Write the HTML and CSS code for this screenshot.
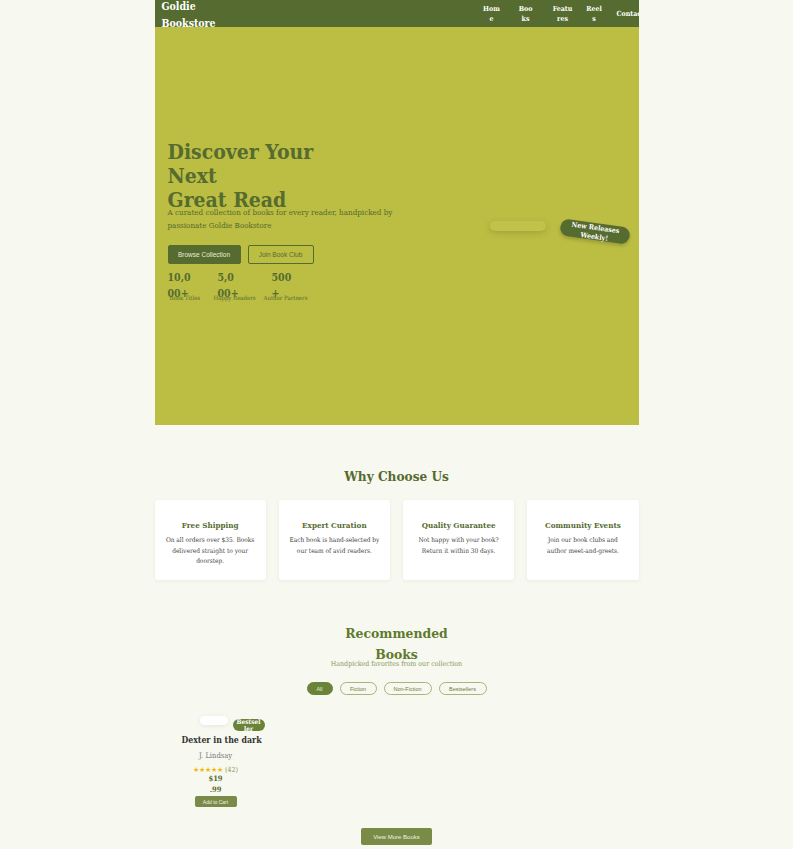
FILE: index.html
```html
<!DOCTYPE html>
<html lang="en">
<head>
<meta charset="utf-8">
<title>Goldie Bookstore</title>
<link rel="stylesheet" href="styles.css">
</head>
<body>
<div class="page">
  <header class="nav">
    <div class="logo">Goldie<br>Bookstore</div>
    <ul class="links">
      <li class="l1">Home</li>
      <li class="l2">Books</li>
      <li class="l3">Features</li>
      <li class="l4">Reels</li>
      <li class="l5">Contact</li>
    </ul>
  </header>

  <section class="hero">
    <div class="hero-text">
      <h1>Discover Your<br>Next<br>Great Read</h1>
      <p class="lead">A curated collection of books for every reader, handpicked by passionate Goldie Bookstore</p>
      <div class="actions">
        <button class="btn-fill">Browse Collection</button>
        <button class="btn-line">Join Book Club</button>
      </div>
      <div class="stats">
        <div class="stat s1"><div class="num">10,0<wbr>00+</div><div class="lbl">Book Titles</div></div>
        <div class="stat s2"><div class="num">5,0<wbr>00+</div><div class="lbl">Happy Readers</div></div>
        <div class="stat s3"><div class="num">500<wbr>+</div><div class="lbl">Author Partners</div></div>
      </div>
    </div>
    <div class="hero-visual">
      <div class="hero-img"></div>
      <div class="hero-badge">New Releases<br>Weekly!</div>
    </div>
  </section>

  <section class="why">
    <h2 class="sec-title">Why Choose Us</h2>
    <div class="cards">
      <div class="card"><h3>Free Shipping</h3><p>On all orders over $35. Books delivered straight to your doorstep.</p></div>
      <div class="card"><h3>Expert Curation</h3><p>Each book is hand-selected by our team of avid readers.</p></div>
      <div class="card"><h3>Quality Guarantee</h3><p>Not happy with your book? Return it within 30 days.</p></div>
      <div class="card"><h3>Community Events</h3><p>Join our book clubs and author meet-and-greets.</p></div>
    </div>
  </section>

  <section class="rec">
    <h2 class="rec-title">Recommended Books</h2>
    <p class="rec-sub">Handpicked favorites from our collection</p>
    <div class="filters">
      <button class="chip active">All</button>
      <button class="chip c-fic">Fiction</button>
      <button class="chip c-wide">Non-Fiction</button>
      <button class="chip c-wide">Bestsellers</button>
    </div>
    <div class="books">
      <div class="book">
        <div class="book-media">
          <div class="book-img"></div>
          <div class="book-badge">Bestsel<wbr>ler</div>
        </div>
        <h4>Dexter in the dark</h4>
        <div class="author">J. Lindsay</div>
        <div class="rating"><span class="stars">★★★★★</span> (42)</div>
        <div class="price">$19<wbr>.99</div>
        <button class="cart">Add to Cart</button>
      </div>
    </div>
    <button class="more">View More Books</button>
  </section>
</div>
</body>
</html>
```

FILE: styles.css
```css
* { box-sizing: border-box; }
body {
  margin: 0;
  background: #f7f8f0;
  font-family: Georgia, "DejaVu Serif", serif;
  font-stretch: condensed;
}
.page {
  width: 484px;
  margin: 0 auto;
}
button { font-family: "Liberation Sans", Arial, sans-serif; font-stretch: normal; cursor: pointer; }

/* NAV */
.nav {
  height: 27px;
  background: #556b2f;
  display: flex;
  justify-content: space-between;
  align-items: flex-start;
  padding-left: 7px;
  overflow: hidden;
}
.logo {
  color: #fff;
  font-weight: bold;
  font-size: 10.5px;
  line-height: 16.5px;
  margin-top: -2px;
}
.links {
  list-style: none;
  margin: 0 -16px 0 0;
  padding: 0;
  display: flex;
  align-items: center;
  height: 27px;
  color: #fff;
  font-size: 7px;
  font-weight: bold;
  line-height: 10px;
  text-align: center;
}
.links li { word-break: break-all; }
.l1 { width: 18px; }
.l2 { width: 15px; margin-left: 17.5px; }
.l3 { width: 21px; margin-left: 19px; }
.l4 { width: 16px; margin-left: 13px; }
.l5 { width: 38px; text-align: left; margin-left: 14.5px; white-space: nowrap; }

/* HERO */
.hero {
  height: 398px;
  background: #bcbd43;
  display: flex;
  align-items: center;
  padding: 0 13px;
  color: #556b2f;
}
.hero-text { width: 250px; margin-top: -10px; }
.hero h1 {
  margin: 0;
  font-size: 21px;
  line-height: 24px;
  font-weight: bold;
  color: #556b2f;
}
.lead {
  margin: -5px 0 0;
  font-size: 8px;
  line-height: 12.5px;
  color: #556b2f;
  width: 250px;
}
.actions { display: flex; gap: 7px; margin-top: 13px; }
.btn-fill, .btn-line {
  height: 19px;
  font-size: 6.5px;
  border-radius: 2px;
  padding: 0;
}
.btn-fill { width: 73px; background: #556b2f; color: #e8ecd8; border: 1px solid #556b2f; }
.btn-line { width: 66px; background: transparent; color: #556b2f; border: 1px solid #556b2f; }
.stats { display: flex; margin-top: 5px; }
.stat { display: flex; flex-direction: column; }
.num {
  width: 24px;
  height: 16px;
  font-size: 10.5px;
  font-weight: bold;
  line-height: 16px;
}
.lbl {
  margin-top: 8px;
  font-size: 6px;
  line-height: 9px;
  white-space: nowrap;
}
.s1 { width: 46px; }
.s1 .lbl { margin-left: 2px; }
.s2 { width: 50px; }
.s2 .num { margin-left: 4px; width: 19px; }
.s3 .num { margin-left: 8px; width: 22px; }
.hero-visual {
  flex: 1;
  position: relative;
  height: 60px;
  display: flex;
  align-items: center;
  padding-left: 72px;
}
.hero-img {
  width: 56px;
  height: 10px;
  border-radius: 6px;
  background: #c1c24c;
  box-shadow: 0 2px 6px rgba(80, 90, 20, 0.25);
}
.hero-badge {
  position: absolute;
  left: 142px;
  top: 27px;
  width: 70px;
  height: 17px;
  border-radius: 9px;
  background: #556b2f;
  color: #fff;
  font-size: 7px;
  font-weight: bold;
  line-height: 9px;
  text-align: center;
  transform: rotate(8deg);
  box-shadow: 0 2px 4px rgba(0,0,0,0.2);
}

/* WHY */
.why { padding-top: 42px; }
.sec-title {
  margin: 0;
  text-align: center;
  font-size: 13.5px;
  line-height: 18px;
  color: #556b2f;
}
.cards {
  display: grid;
  grid-template-columns: repeat(4, 1fr);
  gap: 13px;
  margin-top: 15px;
}
.card {
  background: #fff;
  height: 80px;
  border-radius: 3px;
  box-shadow: 0 1px 4px rgba(0,0,0,0.06);
  text-align: center;
  padding: 19px 10px 0;
}
.card h3 {
  margin: 0 0 4px;
  font-size: 8px;
  line-height: 12px;
  color: #556b2f;
}
.card p {
  margin: 0;
  font-size: 6.5px;
  line-height: 10.5px;
  color: #444;
}

/* RECOMMENDED */
.rec { padding-top: 43px; text-align: center; }
.rec-title {
  margin: 0 auto;
  width: 120px;
  height: 35px;
  font-size: 13.8px;
  line-height: 21px;
  color: #5f7a2e;
}
.rec-sub {
  margin: 0;
  font-size: 7px;
  line-height: 12px;
  color: #8a9a5b;
}
.filters {
  display: flex;
  justify-content: center;
  gap: 7px;
  margin-top: 12px;
}
.chip {
  height: 13px;
  border-radius: 7px;
  border: 1px solid #a9b47a;
  background: transparent;
  color: #6b7f3a;
  font-size: 5.5px;
  padding: 0;
}
.chip.active { width: 26px; background: #6b8239; border-color: #6b8239; color: #e7ecd6; }
.c-fic { width: 37px; }
.c-wide { width: 48px; }

.books {
  display: grid;
  grid-template-columns: repeat(4, 1fr);
  gap: 13px;
  margin-top: 19px;
}
.book { text-align: center; width: 122px; }
.book-media {
  position: relative;
  height: 20px;
  display: flex;
  justify-content: center;
  padding-top: 2px;
}
.book-img {
  width: 28px;
  height: 9px;
  border-radius: 5px;
  background: #fff;
  box-shadow: 0 1px 4px rgba(0,0,0,0.08);
  margin-right: 3px;
}
.book-badge {
  position: absolute;
  left: 78px;
  top: 5px;
  width: 32px;
  height: 12px;
  border-radius: 6px;
  background: #6b8239;
  color: #fff;
  font-size: 6.5px;
  font-weight: bold;
  line-height: 7px;
  overflow: hidden;
  padding: 0 3px;
}
.book h4 {
  margin: 0;
  font-size: 8.7px;
  line-height: 13px;
  color: #333;
  padding-left: 12px;
  white-space: nowrap;
}
.author {
  margin-top: 3.5px;
  font-size: 7.5px;
  line-height: 10px;
  color: #777;
}
.rating {
  margin-top: 5px;
  font-size: 7px;
  line-height: 9px;
  color: #8a9a5b;
}
.stars { color: #f2b705; }
.price {
  width: 16px;
  margin: -2px auto 0;
  font-size: 7.5px;
  font-weight: bold;
  line-height: 11px;
  color: #556b2f;
}
.cart {
  display: block;
  margin: 1.5px auto 0;
  width: 42px;
  height: 11px;
  border: none;
  border-radius: 2px;
  background: #7a8b48;
  color: #eef1e2;
  font-size: 5px;
  padding: 0;
}
.more {
  display: block;
  margin: 21px auto 0;
  width: 71px;
  height: 17px;
  border: none;
  border-radius: 2px;
  background: #7a8b48;
  color: #eef1e2;
  font-size: 6px;
  padding: 0;
}
```
